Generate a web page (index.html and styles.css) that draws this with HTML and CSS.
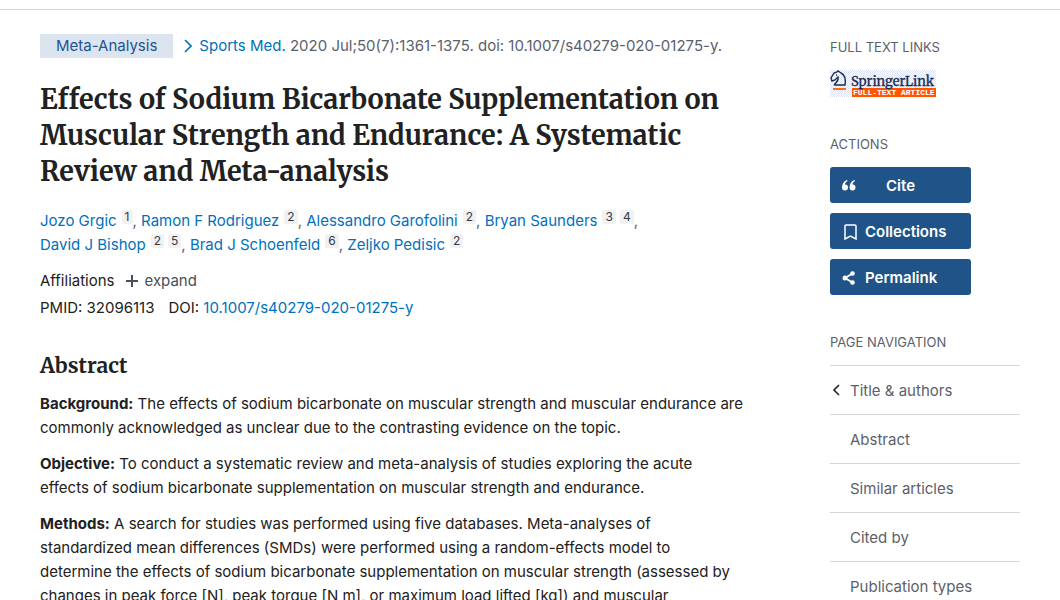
FILE: index.html
```html
<!DOCTYPE html>
<html lang="en">
<head>
    <meta charset="UTF-8">
    <meta name="viewport" content="width=device-width, initial-scale=1.0">
    <title>Effects of Sodium Bicarbonate Supplementation on Muscular Strength and Endurance</title>
    <link rel="stylesheet" href="styles.css">
</head>
<body>
    <div class="page">
        <main class="article">
            <div class="citation">
                <span class="publication-type">Meta-Analysis</span>
                <svg class="chevron" width="8" height="14" viewBox="0 0 8 14" aria-hidden="true"><path d="M1 1l6 6-6 6"/></svg>
                <span><a href="#journal">Sports Med.</a> 2020 Jul;50(7):1361-1375. doi: 10.1007/s40279-020-01275-y.</span>
            </div>
            <h1>Effects of Sodium Bicarbonate Supplementation on Muscular Strength and Endurance: A Systematic Review and Meta-analysis</h1>
            <div class="authors">
                <span class="author"><a href="#author">Jozo Grgic</a><sup>1</sup>,</span>
                <span class="author"><a href="#author">Ramon F Rodriguez</a><sup>2</sup>,</span>
                <span class="author"><a href="#author">Alessandro Garofolini</a><sup>2</sup>,</span>
                <span class="author"><a href="#author">Bryan Saunders</a><sup>3</sup><sup>4</sup>,</span>
                <span class="author"><a href="#author">David J Bishop</a><sup>2</sup><sup>5</sup>,</span>
                <span class="author"><a href="#author">Brad J Schoenfeld</a><sup>6</sup>,</span>
                <span class="author"><a href="#author">Zeljko Pedisic</a><sup>2</sup></span>
            </div>
            <div class="affiliations">
                <span>Affiliations</span>
                <button class="expand-button" type="button">
                    <svg width="12" height="12" viewBox="0 0 12 12" aria-hidden="true"><path d="M6 0v12M0 6h12"/></svg>
                    expand
                </button>
            </div>
            <div class="identifiers">
                <span>PMID: 32096113</span>
                <span>DOI: <a href="#doi">10.1007/s40279-020-01275-y</a></span>
            </div>
            <section class="abstract" id="abstract">
                <h2>Abstract</h2>
                <p><strong>Background:</strong> The effects of sodium bicarbonate on muscular strength and muscular endurance are commonly acknowledged as unclear due to the contrasting evidence on the topic.</p>
                <p><strong>Objective:</strong> To conduct a systematic review and meta-analysis of studies exploring the acute effects of sodium bicarbonate supplementation on muscular strength and endurance.</p>
                <p><strong>Methods:</strong> A search for studies was performed using five databases. Meta-analyses of standardized mean differences (SMDs) were performed using a random-effects model to determine the effects of sodium bicarbonate supplementation on muscular strength (assessed by changes in peak force [N], peak torque [N m], or maximum load lifted [kg]) and muscular</p>
            </section>
        </main>
        <aside class="sidebar">
            <h3>Full text links</h3>
            <a class="springer" href="#full-text" aria-label="SpringerLink full-text article">
                <svg width="106" height="27" viewBox="0 0 106 27">
                    <defs>
                        <pattern id="dots" width="2" height="2" patternUnits="userSpaceOnUse">
                            <rect width="1" height="1" fill="#dde3f3"/>
                            <rect x="1" y="1" width="1" height="1" fill="#dde3f3"/>
                        </pattern>
                    </defs>
                    <rect width="106" height="27" fill="url(#dots)"/>
                    <path d="M4 15h11c1-6 0-10-4-12L8 1 7 2 4 3 1 8l1 3 3-1 3-3c1 3-1 5-4 8M6 5h1" fill="none" stroke="#1b2c50" stroke-width="1.4"/>
                    <rect x="3" y="18" width="13" height="2" fill="#ff6a13"/>
                    <rect x="22" y="18" width="84" height="9" fill="#ff5500"/>
                    <text class="springer-name" x="21" y="16">SpringerLink</text>
                    <text class="springer-label" x="23" y="25">FULL-TEXT ARTICLE</text>
                </svg>
            </a>
            <h3>Actions</h3>
            <div class="actions">
                <button type="button">
                    <svg width="16" height="16" viewBox="0 0 16 16" aria-hidden="true"><path fill="#fff" d="M6 2C3 3 1 6 1 9.500a3 3 0 1 0 3-3C4 5 5 4 6.500 3zM13.500 2c-3 1-5 4-5 7.500a3 3 0 1 0 3-3C11.500 5 12.500 4 14 3z"/></svg>
                    <span class="cite-label">Cite</span>
                </button>
                <button type="button">
                    <svg width="16" height="16" viewBox="0 0 16 16" aria-hidden="true"><path fill="none" stroke="#fff" stroke-width="1.500" d="M5 1h9a1 1 0 0 1 1 1v13l-5.500-3-5.500 3v-13a1 1 0 0 1 1-1z"/></svg>
                    <span>Collections</span>
                </button>
                <button type="button">
                    <svg width="16" height="16" viewBox="0 0 16 16" aria-hidden="true"><path d="M11.500 3.500L4 8l7.500 4.500" fill="none" stroke="#fff" stroke-width="1.800"/><g fill="#fff"><circle cx="11.500" cy="3.500" r="2.300"/><circle cx="4" cy="8" r="2.500"/><circle cx="11.500" cy="12.500" r="2.300"/></g></svg>
                    <span>Permalink</span>
                </button>
            </div>
            <h3>Page navigation</h3>
            <nav class="page-nav">
                <a href="#title"><svg width="8" height="14" viewBox="0 0 8 14" aria-hidden="true"><path d="M7 2L2 7l5 5"/></svg>Title &amp; authors</a>
                <a href="#abstract">Abstract</a>
                <a href="#similar">Similar articles</a>
                <a href="#cited">Cited by</a>
                <a href="#types">Publication types</a>
            </nav>
        </aside>
    </div>
</body>
</html>
```
FILE: styles.css
```css
* {
    box-sizing: border-box;
}

body {
    margin: 0;
    padding-top: 9px;
    font-family: Inter, sans-serif;
    font-size: 15px;
    line-height: 24px;
    color: #212121;
    background-color: #fff;
    height: 100vh;
    overflow: hidden;
}

a {
    color: #0071bc;
    text-decoration: none;
}

a:hover {
    text-decoration: underline;
}

button {
    font: inherit;
    cursor: pointer;
}

.page {
    display: grid;
    grid-template-columns: 1fr 190px;
    gap: 68px;
    padding: 24px 40px 0;
    border-top: 1px solid #d6d7d9;
}

.citation {
    display: flex;
    align-items: center;
    color: #5b616b;
    white-space: nowrap;
}

.publication-type {
    padding: 0 16px;
    background-color: #dce4ef;
    color: #205493;
}

.chevron {
    margin: 0 7px 0 11px;
    fill: none;
    stroke: #0071bc;
    stroke-width: 1.6;
}

h1,
h2 {
    font-family: Merriweather, "Liberation Serif", serif;
    font-weight: bold;
}

h1 {
    margin: 23px 0 20px;
    font-size: 27px;
    line-height: 36px;
}

.authors {
    color: #5b616b;
    max-width: 640px;
}

.author {
    white-space: nowrap;
}

sup {
    display: inline-block;
    margin-left: 5px;
    padding: 0 3px;
    border-radius: 2px;
    background-color: #f1f1f1;
    color: #323a45;
    font-size: 12px;
    line-height: 14px;
    vertical-align: 5px;
}

sup + sup {
    margin-left: 4px;
}

.affiliations {
    display: flex;
    gap: 11px;
    margin-top: 12px;
}

.expand-button {
    display: flex;
    align-items: center;
    gap: 7px;
    padding: 0;
    border: none;
    background: none;
    color: #494f58;
}

.expand-button svg {
    stroke: #494f58;
    stroke-width: 2;
}

.identifiers {
    display: flex;
    gap: 14px;
    margin-top: 3px;
}

h2 {
    margin: 31px 0 11px;
    font-size: 21px;
    line-height: 30px;
}

p {
    max-width: 704px;
    margin: 0 0 12px;
}

.sidebar h3 {
    margin: 0;
    font-size: 13px;
    font-weight: normal;
    line-height: 26px;
    color: #5b616b;
    text-transform: uppercase;
}

.springer {
    display: block;
    margin: 10px 0 34px;
    height: 27px;
}

.springer svg {
    display: block;
}

.springer-name {
    font: 13px Merriweather, "Liberation Serif", serif;
    fill: #1b2c50;
    stroke: #1b2c50;
    stroke-width: 0.3px;
}

.springer-label {
    font: bold 8px "Liberation Mono", monospace;
    fill: #fff;
}

.actions {
    display: flex;
    flex-direction: column;
    gap: 10px;
    width: 141px;
    margin: 10px 0 34px;
}

.actions button {
    display: flex;
    align-items: center;
    gap: 8px;
    height: 36px;
    padding: 1px 11px 0;
    border: none;
    border-radius: 3px;
    background-color: #205488;
    color: #fff;
    font-weight: 600;
}

.cite-label {
    flex: 1;
    padding-right: 24px;
    text-align: center;
}

.page-nav {
    margin-top: 10px;
}

.page-nav a {
    display: block;
    position: relative;
    padding: 13px 0 11px 20px;
    border-top: 1px solid #d6d7d9;
    color: #5b616b;
}

.page-nav svg {
    position: absolute;
    left: 2px;
    top: 17px;
    fill: none;
    stroke: #212121;
    stroke-width: 1.6;
}
```
